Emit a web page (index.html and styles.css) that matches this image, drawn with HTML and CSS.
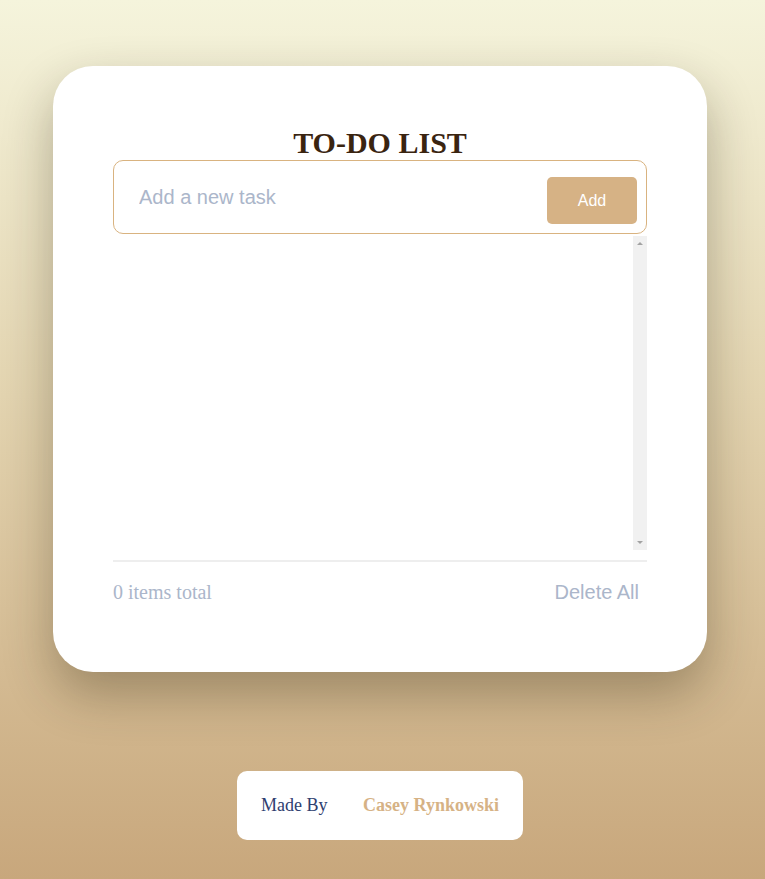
FILE: index.html
```html
<!DOCTYPE html>
<html lang="en">
<head>
<meta charset="utf-8">
<title>To-Do List</title>
<link rel="stylesheet" href="styles.css">
</head>
<body>
<main class="card">
  <h1 class="title">TO-DO LIST</h1>
  <form class="entry">
    <input class="entry-input" type="text" placeholder="Add a new task">
    <button class="entry-btn" type="button">Add</button>
  </form>
  <div class="list-area">
    <ul class="task-list"></ul>
    <div class="scrollbar" aria-hidden="true">
      <span class="arrow arrow-up"></span>
      <span class="arrow arrow-down"></span>
    </div>
  </div>
  <div class="list-footer">
    <span class="count">0 items total</span>
    <button class="delete-all" type="button">Delete All</button>
  </div>
</main>
<footer class="credit">
  <span class="credit-label">Made By</span>
  <span class="credit-name">Casey Rynkowski</span>
</footer>
</body>
</html>
```

FILE: styles.css
```css
html, body {
  margin: 0;
  padding: 0;
}
body {
  min-height: 879px;
  background: linear-gradient(to bottom, #f5f4dc 0%, #e3d4b0 45%, #c8a77c 100%);
  font-family: "Liberation Serif", "Times New Roman", serif;
  display: flex;
  flex-direction: column;
  align-items: center;
  box-sizing: border-box;
  padding: 66px 5px 0 0;
}
.card {
  width: 654px;
  box-sizing: border-box;
  background: #fff;
  border-radius: 40px;
  padding: 60px;
  box-shadow: 0 22px 50px rgba(40, 30, 10, 0.32);
}
.title {
  margin: 0;
  font-size: 30px;
  line-height: 34px;
  font-weight: bold;
  text-align: center;
  color: #3a2410;
}
.entry {
  margin: 0;
  height: 74px;
  box-sizing: border-box;
  border: 1px solid #d9b380;
  border-radius: 10px;
  display: flex;
  align-items: stretch;
  padding: 0 9px 0 25px;
}
.entry-input {
  flex: 1;
  border: none;
  outline: none;
  background: transparent;
  font-family: "Liberation Sans", Arial, sans-serif;
  font-size: 20px;
  color: #333;
  padding: 0;
}
.entry-input::placeholder {
  color: #abb6ca;
}
.entry-btn {
  width: 90px;
  height: 47px;
  margin-top: 16px;
  border: none;
  border-radius: 5px;
  background: #d6b285;
  color: #fff;
  font-family: "Liberation Sans", Arial, sans-serif;
  font-size: 16px;
}
.list-area {
  margin-top: 2px;
  height: 314px;
  display: flex;
}
.task-list {
  flex: 1;
  list-style: none;
  margin: 0;
  padding: 0;
  overflow: hidden;
}
.scrollbar {
  position: relative;
  width: 14px;
  background: #f1f1f1;
}
.arrow {
  position: absolute;
  left: 4px;
  width: 0;
  height: 0;
  border-left: 3px solid transparent;
  border-right: 3px solid transparent;
}
.arrow-up {
  top: 6px;
  border-bottom: 3px solid #a3a3a3;
}
.arrow-down {
  bottom: 6px;
  border-top: 3px solid #a3a3a3;
}
.list-footer {
  margin-top: 10px;
  border-top: 2px solid #eeeeee;
  padding: 12px 0 2px;
  display: flex;
  justify-content: space-between;
  align-items: center;
  min-height: 36px;
}
.count {
  font-size: 20px;
  color: #abb6ca;
}
.delete-all {
  border: none;
  background: none;
  padding: 6px 8px;
  font-family: "Liberation Sans", Arial, sans-serif;
  font-size: 20px;
  color: #abb6ca;
}
.credit {
  margin-top: 99px;
  width: 286px;
  height: 69px;
  box-sizing: border-box;
  background: #fff;
  border-radius: 10px;
  display: flex;
  align-items: center;
  justify-content: space-between;
  padding: 0 24px;
  font-size: 18px;
}
.credit-label {
  color: #2f4070;
}
.credit-name {
  color: #d6b285;
  font-weight: bold;
}
```
